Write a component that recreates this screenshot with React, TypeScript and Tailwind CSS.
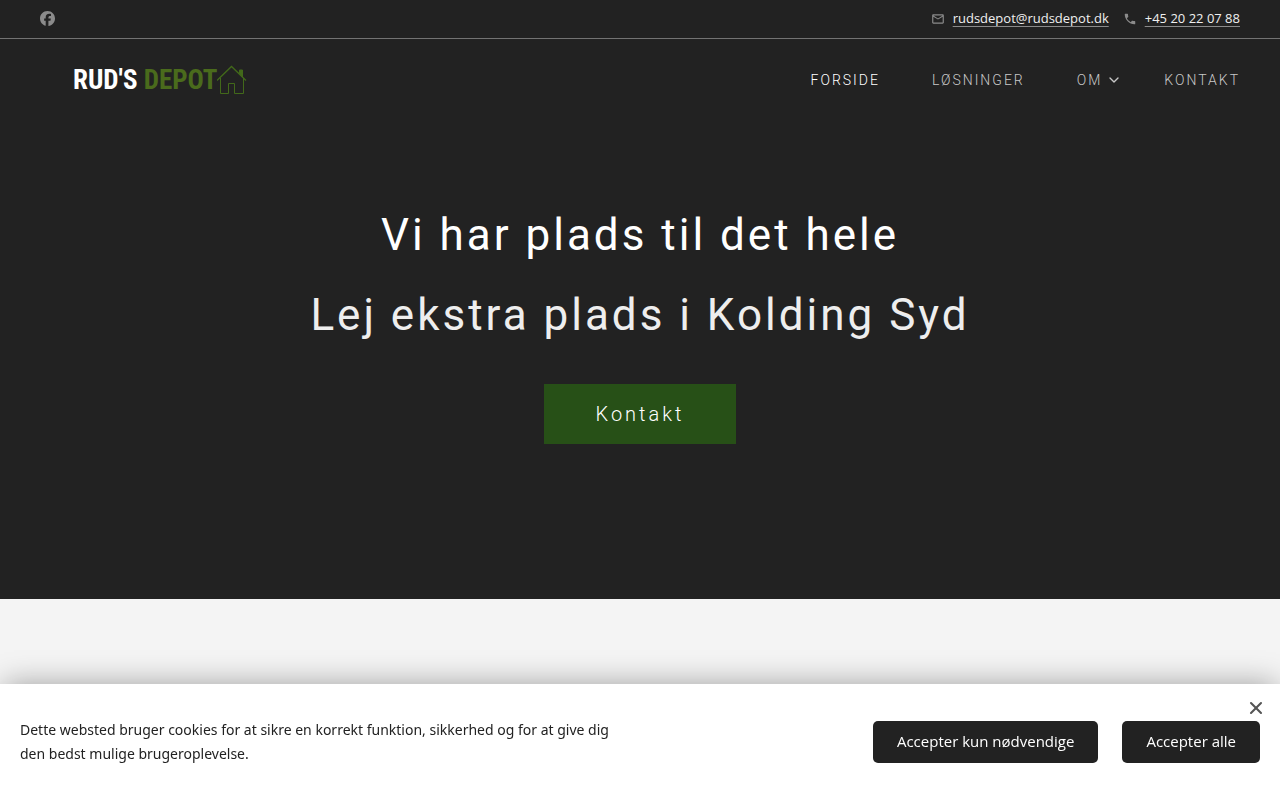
import { useState } from 'react'
import { FaFacebook } from 'react-icons/fa6'
import { MdOutlineEmail, MdPhone } from 'react-icons/md'
import { ChevronDown, X } from 'lucide-react'

const navItems = [
  { label: 'Forside', href: '#forside', active: true },
  { label: 'Løsninger', href: '#losninger' },
  { label: 'Om', href: '#om', hasMenu: true },
  { label: 'Kontakt', href: '#kontakt' },
]

function HouseIcon() {
  return (
    <svg width="30" height="30" viewBox="2 0 30 30" fill="none" stroke="#42691a" strokeWidth="1" aria-hidden="true">
      <path d="M2 15.5 16.5 1.5 31 15.5" strokeWidth="1.3" />
      <path d="M5.5 13V28.5H13.5V18.5H19.5V28.5H28.5V13" />
      <path d="M24.5 8.5V5H27.5V12Z" fill="#42691a" />
    </svg>
  )
}

function TopBar() {
  return (
    <div className="flex h-[39px] items-center justify-between border-b border-[#737373] px-10 pb-px">
      <a href="#facebook" aria-label="Facebook" className="text-[#8b8b8b]">
        <FaFacebook size={15} />
      </a>
      <div className="flex items-center gap-3.5 font-['Open_Sans',sans-serif] text-[13px] font-medium text-[#f0f0f0]">
        <div className="flex items-center gap-2">
          <MdOutlineEmail size={14} className="text-[#8b8b8b]" />
          <a href="mailto:rudsdepot@rudsdepot.dk" className="underline decoration-[#8b8b8b] decoration-1 underline-offset-3">
            rudsdepot@rudsdepot.dk
          </a>
        </div>
        <div className="flex items-center gap-2">
          <MdPhone size={14} className="text-[#8b8b8b]" />
          <a href="tel:+4520220788" className="underline decoration-[#8b8b8b] decoration-1 underline-offset-3">
            +45 20 22 07 88
          </a>
        </div>
      </div>
    </div>
  )
}

function Header() {
  return (
    <header className="flex h-[82px] items-center justify-between pr-10 pl-[73px]">
      <a
        href="#forside"
        className="flex items-center font-['Roboto_Condensed','Liberation_Sans_Narrow',sans-serif] text-[27px] leading-8 font-bold whitespace-pre"
      >
        <span className="text-white">RUD'S </span>
        <span className="text-[#4a6b1c]">DEPOT</span>
        <HouseIcon />
      </a>
      <nav className="flex items-center gap-[52px] text-sm font-light tracking-[2px] uppercase">
        {navItems.map((item) => (
          <a
            key={item.label}
            href={item.href}
            className={item.active ? 'text-white' : 'flex items-center gap-1 text-[#c8c8c8]'}
          >
            {item.label}
            {item.hasMenu && <ChevronDown size={16} className="-mr-2.5" />}
          </a>
        ))}
      </nav>
    </header>
  )
}

function Hero() {
  return (
    <section className="flex flex-col items-center px-10 pt-[74px] pb-[155px] text-center">
      <h1 className="text-[44px] leading-[80px] tracking-[3px] text-white">Vi har plads til det hele</h1>
      <h2 className="text-[44px] leading-[80px] tracking-[3px] text-[#eeeeee]">Lej ekstra plads i Kolding Syd</h2>
      <a
        href="#kontakt"
        className="mt-[29px] bg-[#275017] px-[52px] py-4 text-xl leading-7 font-light tracking-[3px] text-white"
      >
        Kontakt
      </a>
    </section>
  )
}

function CookieBanner({ onClose }: { onClose: () => void }) {
  const buttonClass = 'rounded-[5px] bg-[#222222] px-6 pt-2 pb-2.5 text-[15px] leading-6 text-white'

  return (
    <div
      role="dialog"
      aria-label="Cookies"
      className="fixed inset-x-0 bottom-0 flex items-center justify-between bg-white px-5 py-[34px] font-['Open_Sans',sans-serif] shadow-[0_-4px_28px_-4px_rgba(0,0,0,0.35)]"
    >
      <p className="max-w-[610px] font-['Noto_Sans',sans-serif] text-sm leading-6 text-[#222222]">
        Dette websted bruger cookies for at sikre en korrekt funktion, sikkerhed og for at give dig den bedst mulige
        brugeroplevelse.
      </p>
      <div className="flex gap-6">
        <button type="button" className={buttonClass} onClick={onClose}>
          Accepter kun nødvendige
        </button>
        <button type="button" className={buttonClass} onClick={onClose}>
          Accepter alle
        </button>
      </div>
      <button type="button" aria-label="Luk" className="absolute top-3.5 right-3.5 text-[#555555]" onClick={onClose}>
        <X size={20} strokeWidth={2.5} />
      </button>
    </div>
  )
}

export default function App() {
  const [showCookies, setShowCookies] = useState(true)

  return (
    <div className="min-h-screen bg-[#f4f4f4] font-['Roboto',sans-serif]">
      <div className="bg-[#222222]">
        <TopBar />
        <Header />
        <Hero />
      </div>
      {showCookies && <CookieBanner onClose={() => setShowCookies(false)} />}
    </div>
  )
}
